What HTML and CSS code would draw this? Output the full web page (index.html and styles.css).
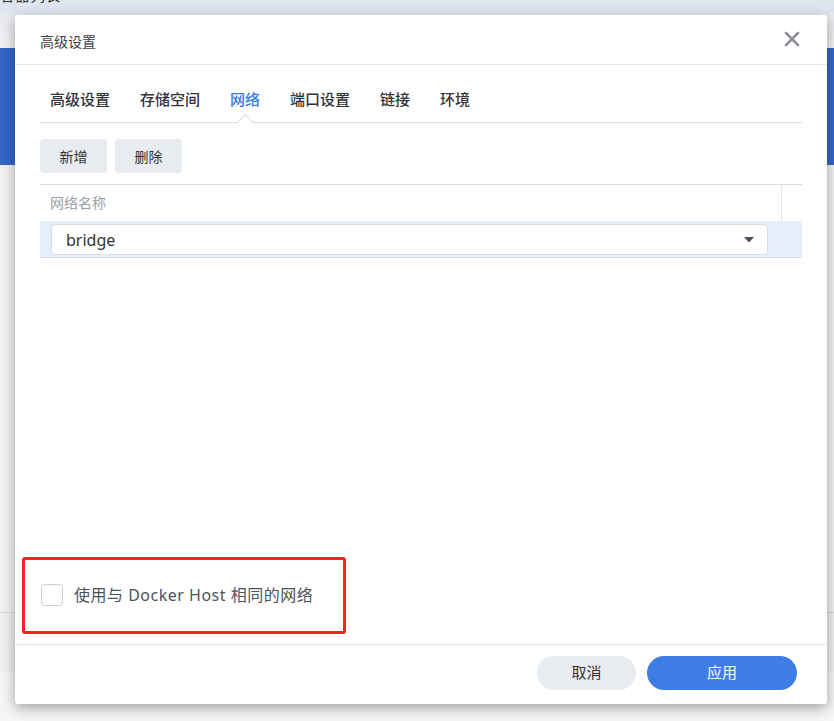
FILE: index.html
```html
<!DOCTYPE html>
<html lang="zh-CN">
<head>
  <meta charset="UTF-8">
  <title>高级设置</title>
  <link rel="stylesheet" href="styles.css">
</head>
<body>
  <div class="backdrop">
    <div class="bd-top"><span>容器列表</span></div>
    <div class="bd-bar"></div>
    <div class="bd-blue"></div>
    <div class="bd-main"></div>
    <div class="bd-foot"></div>
    <div class="bd-bottom"></div>
  </div>

  <div class="dialog">
    <div class="dlg-header">
      <span class="dlg-title">高级设置</span>
      <svg class="dlg-close" width="16" height="16" viewBox="0 0 16 16">
        <path d="M2 2 L14 14 M14 2 L2 14" stroke="#8b9099" stroke-width="2.6" stroke-linecap="round"/>
      </svg>
    </div>

    <div class="dlg-body">
      <div class="tabs">
        <span class="tab">高级设置</span>
        <span class="tab">存储空间</span>
        <span class="tab active">网络</span>
        <span class="tab">端口设置</span>
        <span class="tab">链接</span>
        <span class="tab">环境</span>
      </div>

      <div class="toolbar">
        <button class="btn">新增</button>
        <button class="btn">删除</button>
      </div>

      <div class="grid">
        <div class="grid-head">
          <div class="col-name">网络名称</div>
          <div class="col-pad"></div>
        </div>
        <div class="grid-row">
          <div class="select">
            <span>bridge</span>
            <svg width="10" height="6" viewBox="0 0 10 6"><path d="M0 0 L10 0 L5 5.5 Z" fill="#4a4f57"/></svg>
          </div>
        </div>
      </div>

      <div class="spacer"></div>

      <div class="host-opt">
        <span class="checkbox"></span>
        <span class="host-label">使用与 Docker Host 相同的网络</span>
      </div>
    </div>

    <div class="dlg-footer">
      <button class="pill">取消</button>
      <button class="pill primary">应用</button>
    </div>
  </div>
</body>
</html>
```

FILE: styles.css
```css
html, body {
  margin: 0;
  padding: 0;
  height: 100%;
  overflow: hidden;
}
body {
  font-family: "Noto Sans", "Noto Sans CJK SC", sans-serif;
  color: #333;
  background: #f7f7f7;
}
.backdrop {
  display: flex;
  flex-direction: column;
  height: 721px;
}
.bd-top {
  height: 13px;
  background: #dfe5ef;
  overflow: hidden;
}
.bd-top span {
  display: block;
  margin-top: -16px;
  font-size: 15px;
  color: #333;
}
.bd-bar {
  height: 35px;
  background: linear-gradient(#e7e9ed, #f1f2f4);
}
.bd-blue {
  height: 117px;
  background: #3566c8;
}
.bd-main {
  height: 447px;
  background: #f2f2f2;
  border-bottom: 1px solid #d3d7de;
}
.bd-foot {
  height: 59px;
  background: #f0f0f0;
}
.bd-bottom {
  flex: 1;
  background: #f6f6f6;
}

/* dialog */
.dialog {
  position: absolute;
  left: 15px;
  top: 15px;
  width: 812px;
  height: 689px;
  background: #fff;
  border-radius: 3px;
  box-shadow: 0 4px 14px rgba(0, 0, 0, 0.35);
  display: flex;
  flex-direction: column;
}
.dlg-header {
  height: 50px;
  flex: none;
  display: flex;
  align-items: center;
  justify-content: space-between;
  padding: 0 27px 0 25px;
  border-bottom: 1px solid #e2e6ed;
  box-sizing: border-box;
}
.dlg-title {
  font-size: 14px;
  color: #3c4048;
  padding-top: 2px;
}
.dlg-close {
  margin-top: -2px;
}
.dlg-body {
  flex: 1;
  display: flex;
  flex-direction: column;
  padding: 0 25px;
}
.tabs {
  display: flex;
  gap: 30px;
  padding: 0 0 12px 10px;
  height: 58px;
  align-items: flex-end;
  box-sizing: border-box;
  border-bottom: 1px solid #d9dee6;
}
.tab {
  font-size: 15px;
  font-weight: 500;
  color: #30343a;
  line-height: 22px;
  position: relative;
}
.tab.active {
  color: #3b7be6;
}
.tab.active::after {
  content: "";
  position: absolute;
  left: 50%;
  bottom: -17px;
  width: 10px;
  height: 10px;
  margin-left: -5px;
  background: #fff;
  border-left: 1px solid #d9dee6;
  border-top: 1px solid #d9dee6;
  transform: rotate(45deg);
}
.toolbar {
  display: flex;
  gap: 8px;
  margin-top: 16px;
}
.btn {
  width: 67px;
  height: 34px;
  border: none;
  border-radius: 4px;
  background: #e8ecf1;
  font-family: inherit;
  font-size: 14px;
  color: #333;
}
.grid {
  margin-top: 11px;
  border-top: 1px solid #d7dde6;
}
.grid-head {
  display: flex;
  height: 36px;
}
.col-name {
  flex: 1;
  padding-left: 10px;
  font-size: 14px;
  color: #9aa0a8;
  line-height: 36px;
  border-right: 1px solid #e2e6ec;
}
.col-pad {
  width: 20px;
}
.grid-row {
  height: 37px;
  background: #e6eef9;
  border-bottom: 1px solid #d9e0ea;
  padding: 3px 34px 0 11px;
  box-sizing: border-box;
}
.select {
  height: 31px;
  background: #fff;
  border: 1px solid #d6dde7;
  border-radius: 4px;
  box-sizing: border-box;
  display: flex;
  align-items: center;
  justify-content: space-between;
  padding: 0 13px 0 14px;
  font-size: 16px;
  color: #333;
}
.spacer {
  flex: 1;
}
.host-opt {
  margin: 0 0 10px -18px;
  width: 324px;
  height: 77px;
  box-sizing: border-box;
  border: 3px solid #ff1f1f;
  border-radius: 3px;
  display: flex;
  align-items: center;
  padding: 0 0 1px 16px;
  gap: 11px;
}
.checkbox {
  width: 22px;
  height: 22px;
  box-sizing: border-box;
  border: 1px solid #c8cfd8;
  border-radius: 4px;
  background: #fff;
}
.host-label {
  font-size: 16px;
  color: #4c535c;
  letter-spacing: 0.5px;
  margin-top: -3px;
}
.dlg-footer {
  height: 60px;
  flex: none;
  border-top: 1px solid #dfe4ed;
  box-sizing: border-box;
  display: flex;
  justify-content: flex-end;
  align-items: flex-start;
  gap: 11px;
  padding: 11px 30px 0 0;
}
.pill {
  height: 34px;
  width: 99px;
  border: none;
  border-radius: 17px;
  background: #e8ecf1;
  font-family: inherit;
  font-size: 15px;
  line-height: 30px;
  padding-bottom: 4px;
  color: #333;
}
.pill.primary {
  width: 150px;
  background: #3f7de6;
  color: #fff;
}
```
